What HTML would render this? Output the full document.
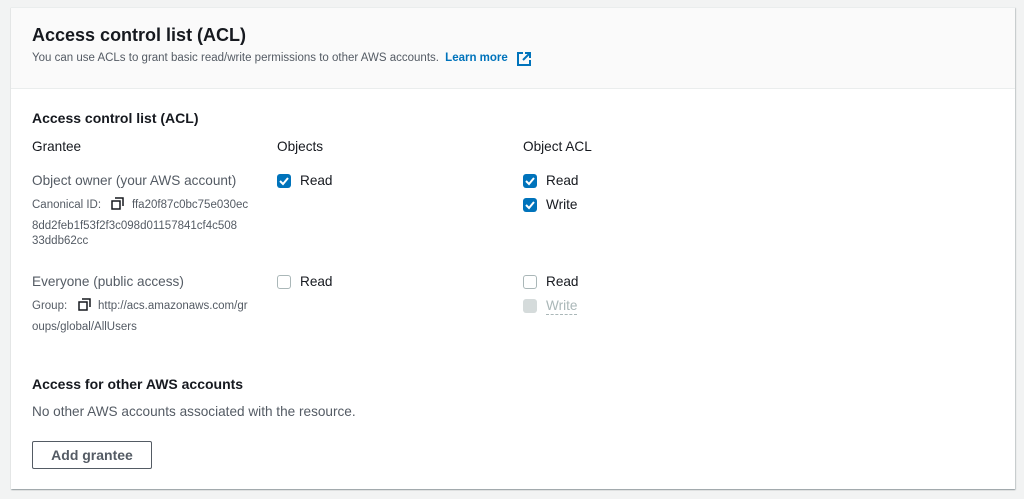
<!DOCTYPE html><html><head><style>
body{margin:0;width:1024px;height:499px;background:#f2f3f3;font-family:"Liberation Sans",sans-serif;color:#16191f;position:relative;overflow:hidden}
.card{position:absolute;left:11px;top:7px;width:1004px;height:481px;background:#fff;box-shadow:0 1px 1px rgba(0,28,36,.3),1px 1px 1px rgba(0,28,36,.15);border-top:1px solid #eaeded}
.hdr{position:absolute;left:0;top:0;width:1004px;height:80px;background:#fafafa;border-bottom:1px solid #eaeded}
.t{position:absolute;white-space:nowrap}
.cb{position:absolute;width:14px;height:14px;border-radius:3px;box-sizing:border-box}
.on{background:#0073bb}
.off{border:1px solid #aab7b8;background:#fff}
.dis{background:#d5dbdb}
.g{color:#545b64}
.m{font-size:13.6px}
</style></head><body>
<div class="card">
<div class="hdr"></div>
<div class="t" style="left:21px;top:17px;font-size:18px;font-weight:bold">Access control list (ACL)</div>
<div class="t g" style="left:21px;top:44px;font-size:11.5px">You can use ACLs to grant basic read/write permissions to other AWS accounts. <b style="color:#0073bb;margin-left:3px">Learn more</b></div>
<svg style="position:absolute;left:506px;top:44px" width="14" height="14" viewBox="0 0 14 14" fill="none" stroke="#0073bb" stroke-width="2"><path d="M6 1H1v12h12V8M8 1h5v5M13 1L6 8"/></svg>
<div class="t" style="left:21px;top:102px;font-size:14px;font-weight:bold">Access control list (ACL)</div>
<div class="t m" style="left:21px;top:131px">Grantee</div>
<div class="t m" style="left:266px;top:131px">Objects</div>
<div class="t m" style="left:512px;top:131px">Object ACL</div>
<div class="t g m" style="left:21px;top:165px">Object owner (your AWS account)</div>
<div class="t g" style="left:21px;top:191px;font-size:11.5px">Canonical ID:</div>
<svg style="position:absolute;left:100px;top:189px" width="13" height="13" viewBox="0 0 13 13" fill="none" stroke="#16191f" stroke-width="1.5"><path d="M1 4h8v8H1zM4 1h8v8"/></svg>
<div class="t g" style="left:121px;top:191px;font-size:11.5px">ffa20f87c0bc75e030ec</div>
<div class="t g" style="left:21px;top:212px;font-size:11.5px">8dd2feb1f53f2f3c098d01157841cf4c508</div>
<div class="t g" style="left:21px;top:227px;font-size:11.5px">33ddb62cc</div>
<div class="t g m" style="left:21px;top:266px">Everyone (public access)</div>
<div class="t g" style="left:21px;top:292px;font-size:11.5px">Group:</div>
<svg style="position:absolute;left:67px;top:290px" width="13" height="13" viewBox="0 0 13 13" fill="none" stroke="#16191f" stroke-width="1.5"><path d="M1 4h8v8H1zM4 1h8v8"/></svg>
<div class="t g" style="left:87px;top:292px;font-size:11.5px">http://acs.amazonaws.com/gr</div>
<div class="t g" style="left:21px;top:313px;font-size:11.5px">oups/global/AllUsers</div>
<svg class="cb on" style="left:266px;top:166px" viewBox="0 0 14 14"><path d="M3 7l3 3 5-6" stroke="#fff" stroke-width="2" fill="none"/></svg>
<div class="t m" style="left:289px;top:165px">Read</div>
<svg class="cb on" style="left:512px;top:166px" viewBox="0 0 14 14"><path d="M3 7l3 3 5-6" stroke="#fff" stroke-width="2" fill="none"/></svg>
<div class="t m" style="left:535px;top:165px">Read</div>
<svg class="cb on" style="left:512px;top:190px" viewBox="0 0 14 14"><path d="M3 7l3 3 5-6" stroke="#fff" stroke-width="2" fill="none"/></svg>
<div class="t m" style="left:535px;top:189px">Write</div>
<div class="cb off" style="left:266px;top:267px"></div>
<div class="t m" style="left:289px;top:266px">Read</div>
<div class="cb off" style="left:512px;top:267px"></div>
<div class="t m" style="left:535px;top:266px">Read</div>
<div class="cb dis" style="left:512px;top:291px"></div>
<div class="t m" style="left:535px;top:290px;color:#aab7b8;border-bottom:1px dashed #aab7b8;padding-bottom:1px">Write</div>
<div class="t" style="left:21px;top:368px;font-size:14px;font-weight:bold">Access for other AWS accounts</div>
<div class="t g m" style="left:21px;top:396px">No other AWS accounts associated with the resource.</div>
<div style="position:absolute;left:21px;top:433px;width:120px;height:28px;box-sizing:border-box;border:1px solid #545b64;border-radius:2px;font-size:14px;font-weight:bold;color:#545b64;text-align:center;line-height:26px">Add grantee</div>
</div>
</body></html>
